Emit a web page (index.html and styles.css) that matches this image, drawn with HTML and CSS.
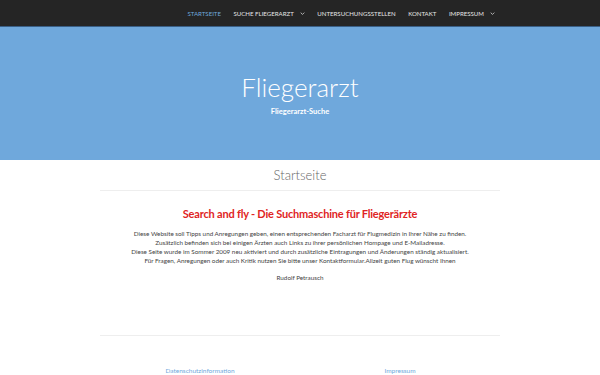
FILE: index.html
```html
<!DOCTYPE html>
<html lang="de">
<head>
    <meta charset="UTF-8">
    <meta name="viewport" content="width=device-width, initial-scale=1.0">
    <title>Fliegerarzt</title>
    <link rel="stylesheet" href="styles.css">
</head>
<body>
<nav class="topbar">
    <ul class="menu">
        <li class="active">Startseite</li>
        <li>Suche Fliegerarzt <svg class="caret" viewBox="0 0 8 5" width="5" height="3"><path d="M1 1l3 3 3-3" fill="none" stroke="#ddd" stroke-width="1.3"/></svg></li>
        <li>Untersuchungsstellen</li>
        <li>Kontakt</li>
        <li>Impressum <svg class="caret" viewBox="0 0 8 5" width="5" height="3"><path d="M1 1l3 3 3-3" fill="none" stroke="#ddd" stroke-width="1.3"/></svg></li>
    </ul>
</nav>

<header class="hero">
    <h1>Fliegerarzt</h1>
    <p>Fliegerarzt-Suche</p>
</header>

<main class="container">
    <h2 class="page-title">Startseite</h2>
    <section class="content">
        <h3>Search and fly - Die Suchmaschine für Fliegerärzte</h3>
        <p>
            Diese Website soll Tipps und Anregungen geben, einen entsprechenden Facharzt für Flugmedizin in Ihrer Nähe zu finden.<br>
            Zusätzlich befinden sich bei einigen Ärzten auch Links zu ihrer persönlichen Hompage und E-Mailadresse.<br>
            Diese Seite wurde im Sommer 2009 neu aktiviert und durch zusätzliche Eintragungen und Änderungen ständig aktualisiert.<br>
            Für Fragen, Anregungen oder auch Kritik nutzen Sie bitte unser Kontaktformular.Allzeit guten Flug wünscht Ihnen
        </p>
        <p class="sign">Rudolf Petrausch</p>
    </section>
</main>

<footer class="footer">
    <div class="footer-links">
        <a href="#">Datenschutzinformation</a>
        <a href="#">Impressum</a>
    </div>
</footer>
</body>
</html>
```

FILE: styles.css
```css
body {
    margin: 0;
    font-family: 'Lato', 'Open Sans', sans-serif;
    background: #ffffff;
    color: #444;
}
.topbar {
    background: #252525;
    height: 26px;
    border-bottom: 1px solid #3a5f86;
    display: flex;
    justify-content: flex-end;
}
.menu {
    list-style: none;
    margin: 0;
    padding: 0 105px 0 0;
    display: flex;
    align-items: center;
    gap: 12.5px;
}
.menu li {
    font-size: 6.1px;
    text-transform: uppercase;
    color: #e6e6e6;
    display: flex;
    align-items: center;
}
.menu li.active {
    color: #6fa8dc;
}
.caret {
    margin-left: 6px;
}
.hero {
    background: #6fa8dc;
    height: 133px;
    text-align: center;
    color: #ffffff;
    overflow: hidden;
}
.hero h1 {
    margin: 44px 0 0;
    font-size: 26px;
    font-weight: 300;
    line-height: 32px;
}
.hero p {
    margin: 4px 0 0;
    font-size: 7.5px;
    font-weight: bold;
}
.container {
    width: 400px;
    margin: 0 auto;
    border-bottom: 1px solid #eeeeee;
    height: 175px;
}
.page-title {
    margin: 0;
    padding: 7px 0 7px;
    font-size: 13px;
    font-weight: 300;
    color: #666;
    text-align: center;
    border-bottom: 1px solid #eeeeee;
}
.content {
    text-align: center;
}
.content h3 {
    margin: 16px 0 9px;
    font-size: 11px;
    letter-spacing: -0.2px;
    color: #e02424;
}
.content p {
    margin: 0;
    font-size: 6.3px;
    line-height: 9px;
    color: #444;
}
.content p.sign {
    margin-top: 8px;
}
.footer {
    width: 400px;
    margin: 0 auto;
}
.footer-links {
    display: grid;
    grid-template-columns: 1fr 1fr;
    padding-top: 31px;
    text-align: center;
}
.footer-links a {
    font-size: 6.5px;
    color: #6fa8dc;
    text-decoration: none;
}
```
